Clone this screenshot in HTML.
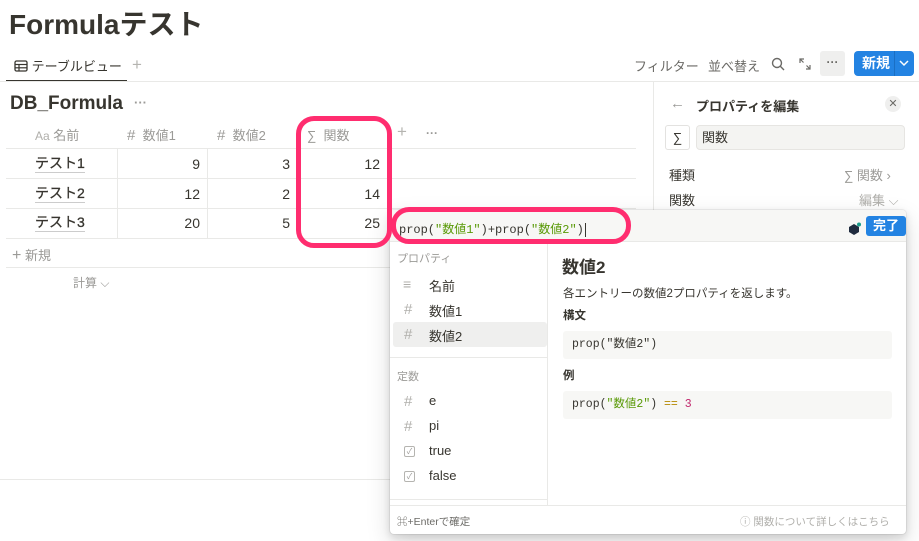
<!DOCTYPE html>
<html><head><meta charset="utf-8"><style>
*{margin:0;padding:0;box-sizing:border-box}
body{width:919px;height:541px;overflow:hidden;background:#fff;font-family:"Liberation Sans","Noto Sans CJK JP",sans-serif;color:#37352f;position:relative}
.a{position:absolute;white-space:nowrap}
.g{color:#9b9a97}
.mono{font-family:"Liberation Mono","Noto Sans CJK JP",monospace}
.hl{position:absolute;left:0;height:1px;background:#e9e9e7}
</style></head><body>
<div class="a" style="left:9px;top:3px;font-size:28px;font-weight:700;color:#37352f">Formulaテスト</div>
<div class="a" style="left:14px;top:56px;font-size:13px">
<svg width="14" height="12" style="vertical-align:-1px"><rect x="1" y="1" width="12" height="10" rx="1.5" fill="none" stroke="#37352f" stroke-width="1.3"/><line x1="1" y1="4.5" x2="13" y2="4.5" stroke="#37352f" stroke-width="1.2"/><line x1="1" y1="7.8" x2="13" y2="7.8" stroke="#37352f" stroke-width="1.2"/><line x1="5" y1="4.5" x2="5" y2="11" stroke="#37352f" stroke-width="1.2"/></svg> テーブルビュー</div>
<div class="a g" style="left:132px;top:55px;font-size:17px;color:#b5b4b0">+</div>
<div class="a" style="left:6px;top:80px;width:121px;height:2px;background:#37352f"></div>
<div class="hl" style="top:81px;width:919px"></div>
<div class="a" style="left:634px;top:56px;font-size:13px;color:#6b6a66">フィルター</div>
<div class="a" style="left:708px;top:56px;font-size:13px;color:#6b6a66">並べ替え</div>
<svg class="a" style="left:771px;top:57px" width="14" height="14"><circle cx="6" cy="6" r="4.5" fill="none" stroke="#6b6a66" stroke-width="1.4"/><line x1="9.3" y1="9.3" x2="13" y2="13" stroke="#6b6a66" stroke-width="1.4"/></svg>
<svg class="a" style="left:799px;top:58px" width="12" height="12"><path d="M1 5V1h4M1 1l3.5 3.5M11 7v4H7M11 11L7.5 7.5" fill="none" stroke="#6b6a66" stroke-width="1.2"/></svg>
<div class="a" style="left:820px;top:51px;width:25px;height:25px;background:#efefee;border-radius:3px;text-align:center;font-size:12px;line-height:22px;color:#6b6a66;font-weight:700">···</div>
<div class="a" style="left:854px;top:51px;width:60px;height:25px;background:#2383e2;border-radius:4px;color:#fff;font-size:14px;font-weight:700;line-height:25px;padding-left:8px">新規<span style="position:absolute;left:40px;top:0;width:1px;height:25px;background:#1a6fc4"></span><svg style="position:absolute;left:45px;top:9px" width="10" height="7"><path d="M1 1l4 4 4-4" fill="none" stroke="#fff" stroke-width="1.5"/></svg></div>
<div class="a" style="left:10px;top:93px;font-size:19px;font-weight:700">DB_Formula</div>
<div class="a g" style="left:134px;top:95px;font-size:13px;font-weight:700">···</div>
<div class="a g" style="left:35px;top:125px;font-size:13px"><span style="font-size:12px;color:#b0afab">Aa</span> 名前</div>
<div class="a g" style="left:127px;top:125px;font-size:13px"><span style="font-size:15px">#</span>&nbsp; 数値1</div>
<div class="a g" style="left:217px;top:125px;font-size:13px"><span style="font-size:15px">#</span>&nbsp; 数値2</div>
<div class="a g" style="left:307px;top:125px;font-size:13px">∑&nbsp; 関数</div>
<div class="a g" style="left:397px;top:122px;font-size:17px;color:#b5b4b0">+</div>
<div class="a g" style="left:426px;top:126px;font-size:12px;font-weight:700">···</div>
<div class="hl" style="top:148px;left:6px;width:630px"></div>
<div class="hl" style="top:178px;left:6px;width:630px"></div>
<div class="hl" style="top:208px;left:6px;width:630px"></div>
<div class="hl" style="top:238px;left:6px;width:630px"></div>
<div class="hl" style="top:267px;left:6px;width:630px"></div>
<div class="a" style="left:117px;top:148px;width:1px;height:90px;background:#e9e9e7"></div>
<div class="a" style="left:207px;top:148px;width:1px;height:90px;background:#e9e9e7"></div>
<div class="a" style="left:297px;top:148px;width:1px;height:90px;background:#e9e9e7"></div>
<div class="a" style="left:387px;top:148px;width:1px;height:90px;background:#e9e9e7"></div>
<div class="a" style="left:35px;top:155px;font-size:14px;border-bottom:1px solid #ccc;line-height:17px;-webkit-text-stroke:0.3px #37352f">テスト1</div>
<div class="a" style="left:35px;top:185px;font-size:14px;border-bottom:1px solid #ccc;line-height:17px;-webkit-text-stroke:0.3px #37352f">テスト2</div>
<div class="a" style="left:35px;top:214px;font-size:14px;border-bottom:1px solid #ccc;line-height:17px;-webkit-text-stroke:0.3px #37352f">テスト3</div>
<div class="a" style="left:150px;top:156px;width:50px;text-align:right;font-size:14px">9</div>
<div class="a" style="left:240px;top:156px;width:50px;text-align:right;font-size:14px">3</div>
<div class="a" style="left:330px;top:156px;width:50px;text-align:right;font-size:14px">12</div>
<div class="a" style="left:150px;top:186px;width:50px;text-align:right;font-size:14px">12</div>
<div class="a" style="left:240px;top:186px;width:50px;text-align:right;font-size:14px">2</div>
<div class="a" style="left:330px;top:186px;width:50px;text-align:right;font-size:14px">14</div>
<div class="a" style="left:150px;top:215px;width:50px;text-align:right;font-size:14px">20</div>
<div class="a" style="left:240px;top:215px;width:50px;text-align:right;font-size:14px">5</div>
<div class="a" style="left:330px;top:215px;width:50px;text-align:right;font-size:14px">25</div>
<div class="a g" style="left:12px;top:245px;font-size:13px"><span style="font-size:16px">+</span> 新規</div>
<div class="a g" style="left:73px;top:274px;font-size:12px">計算 ⌵</div>
<div class="hl" style="top:479px;left:0;width:390px"></div>
<div class="a" style="left:653px;top:82px;width:1px;height:140px;background:#e9e9e7"></div>
<div class="a g" style="left:670px;top:95px;font-size:15px">←</div>
<div class="a" style="left:696px;top:96px;font-size:13px;font-weight:700">プロパティを編集</div>
<div class="a" style="left:885px;top:96px;width:16px;height:16px;border-radius:50%;background:#efefee;text-align:center;font-size:11px;line-height:16px;color:#6b6a66">✕</div>
<div class="a" style="left:665px;top:125px;width:25px;height:25px;border:1px solid #e3e2e0;border-radius:3px;text-align:center;line-height:23px;font-size:13px">∑</div>
<div class="a" style="left:696px;top:125px;width:209px;height:25px;background:#f4f4f2;border:1px solid #e6e5e2;border-radius:4px;font-size:13px;line-height:23px;padding-left:5px">関数</div>
<div class="a" style="left:669px;top:165px;font-size:13px">種類</div>
<div class="a g" style="left:844px;top:165px;font-size:13px">∑ 関数 ›</div>
<div class="a" style="left:669px;top:190px;font-size:13px">関数</div>
<div class="a g" style="left:859px;top:190px;font-size:13px;color:#b0afab">編集 ⌵</div>
<div class="a" style="left:390px;top:210px;width:516px;height:324px;background:#fff;border-radius:4px;box-shadow:0 0 0 1px rgba(15,15,15,.06),0 3px 8px rgba(15,15,15,.12),0 9px 24px rgba(15,15,15,.15)">
 <div style="position:absolute;left:0;top:0;width:516px;height:32px;background:#f7f7f5;border-bottom:1px solid #e9e9e7;border-radius:4px 4px 0 0"></div>
 <div class="a mono" style="left:9px;top:10px;font-size:12px">prop(<span style="color:#5a9a08">"数値1"</span>)+prop(<span style="color:#5a9a08">"数値2"</span>)<span style="border-left:1px solid #37352f;margin-left:1px"></span></div>
 <svg class="a" style="left:458px;top:12px" width="14" height="14"><path d="M6 2l5 3v5l-5 3-5-3V5z" fill="#1f2b3e"/><circle cx="11" cy="2.5" r="2" fill="#1a9b8a"/></svg>
 <div class="a" style="left:476px;top:6px;width:40px;height:20px;background:#2383e2;border-radius:3px;color:#fff;font-size:13px;font-weight:700;text-align:center;line-height:20px">完了</div>
 <div class="a" style="left:157px;top:33px;width:1px;height:262px;background:#e9e9e7"></div>
 <div class="a g" style="left:7px;top:40px;font-size:11px">プロパティ</div>
 <div class="a" style="left:3px;top:112px;width:154px;height:25px;background:#efefee;border-radius:3px"></div>
 <div class="a g" style="left:13px;top:66px;font-size:14px;color:#b0afab">≡</div>
 <div class="a" style="left:39px;top:66px;font-size:13px">名前</div>
 <div class="a g" style="left:14px;top:91px;font-size:15px;color:#b0afab">#</div>
 <div class="a" style="left:39px;top:91px;font-size:13px">数値1</div>
 <div class="a g" style="left:14px;top:116px;font-size:15px;color:#b0afab">#</div>
 <div class="a" style="left:39px;top:116px;font-size:13px">数値2</div>
 <div class="a" style="left:0;top:147px;width:157px;height:1px;background:#e9e9e7"></div>
 <div class="a g" style="left:7px;top:158px;font-size:11px">定数</div>
 <div class="a g" style="left:14px;top:183px;font-size:15px;color:#b0afab">#</div><div class="a" style="left:39px;top:183px;font-size:13px">e</div>
 <div class="a g" style="left:14px;top:208px;font-size:15px;color:#b0afab">#</div><div class="a" style="left:39px;top:208px;font-size:13px">pi</div>
 <div class="a" style="left:14px;top:236px;width:11px;height:11px;border:1px solid #b5b4b0;border-radius:2px;font-size:8px;color:#9b9a97;text-align:center;line-height:9px">✓</div><div class="a" style="left:39px;top:233px;font-size:13px">true</div>
 <div class="a" style="left:14px;top:261px;width:11px;height:11px;border:1px solid #b5b4b0;border-radius:2px;font-size:8px;color:#9b9a97;text-align:center;line-height:9px">✓</div><div class="a" style="left:39px;top:258px;font-size:13px">false</div>
 <div class="a" style="left:0;top:289px;width:157px;height:1px;background:#e9e9e7"></div>
 <div class="a" style="left:172px;top:43px;font-size:17px;font-weight:700">数値2</div>
 <div class="a" style="left:173px;top:75px;font-size:11.5px">各エントリーの数値2プロパティを返します。</div>
 <div class="a" style="left:173px;top:97px;font-size:11.5px;font-weight:700">構文</div>
 <div class="a mono" style="left:173px;top:121px;width:329px;height:28px;background:#f7f7f5;border-radius:3px;font-size:11.5px;line-height:28px;padding-left:9px">prop("数値2")</div>
 <div class="a" style="left:173px;top:157px;font-size:11.5px;font-weight:700">例</div>
 <div class="a mono" style="left:173px;top:181px;width:329px;height:28px;background:#f7f7f5;border-radius:3px;font-size:11.5px;line-height:28px;padding-left:9px">prop(<span style="color:#5a9a08">"数値2"</span>) <span style="color:#b58900">==</span> <span style="color:#c0246a">3</span></div>
 <div class="a" style="left:0;top:295px;width:516px;height:1px;background:#e9e9e7"></div>
 <div class="a g" style="left:7px;top:304px;font-size:10.5px;color:#6b6a66">⌘+Enterで確定</div>
 <div class="a g" style="left:350px;top:304px;font-size:10.5px;color:#b0afab">ⓘ 関数について詳しくはこちら</div>
</div>
<div class="a" style="left:296px;top:116px;width:96px;height:132px;border:5px solid #ff2d6f;border-radius:18px"></div>
<div class="a" style="left:391px;top:207px;width:240px;height:37px;border:5px solid #ff2d6f;border-radius:18px"></div>
</body></html>
